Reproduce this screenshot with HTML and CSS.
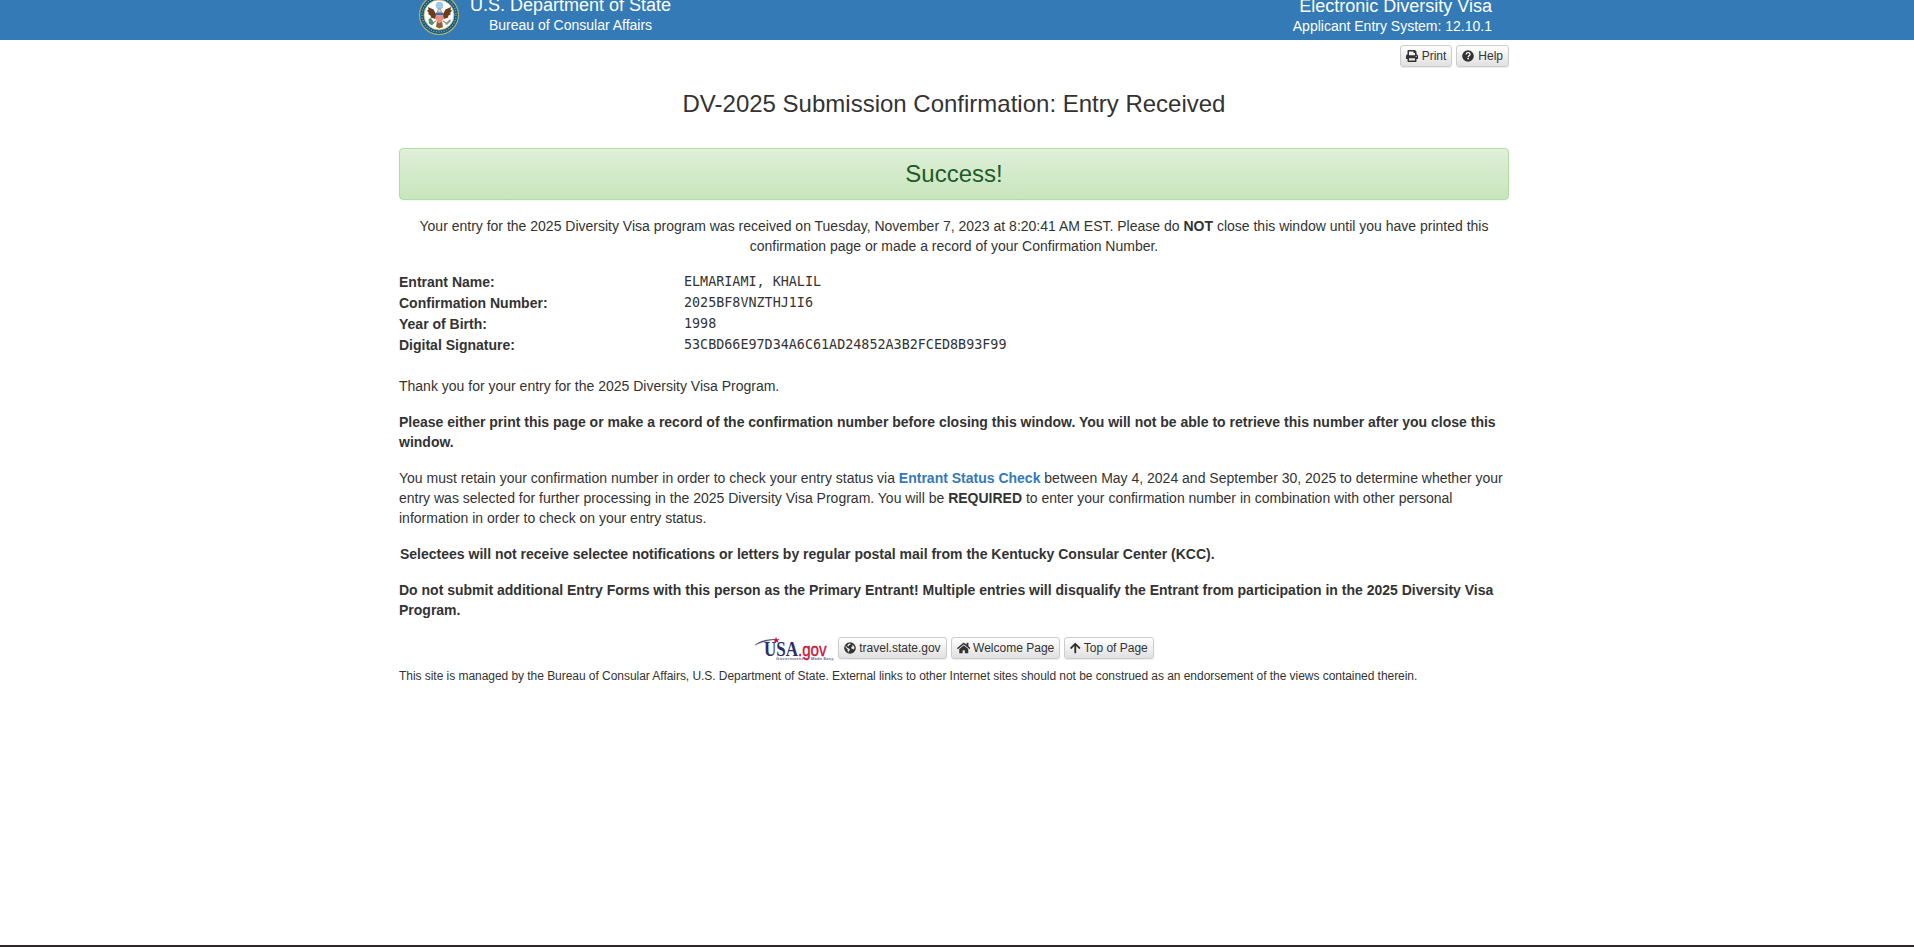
FILE: index.html
```html
<!DOCTYPE html>
<html lang="en">
<head>
<meta charset="utf-8">
<title>DV-2025 Submission Confirmation</title>
<link rel="stylesheet" href="styles.css">
</head>
<body>
<header class="banner">
  <div class="banner-inner">
    <svg class="seal" viewBox="0 0 40 40">
      <circle cx="20" cy="20" r="20" fill="#b9b36a"/>
      <circle cx="20" cy="20" r="18.900" fill="#155a86"/>
      <circle cx="20" cy="20" r="17" fill="none" stroke="#8fae96" stroke-width="1.300" stroke-dasharray="1.100 1.500"/>
      <circle cx="20" cy="20" r="15" fill="#fff" stroke="#c5b865" stroke-width=".8"/>
      <circle cx="20.500" cy="10.500" r="3.800" fill="#9cc8ec"/>
      <path d="M17 19 L14.500 14.500 L9 12 L9.500 15 L7.800 15.500 L10 18 L9 19 L12 21 L11.500 22.500 L16.500 24Z M24 19 L26.500 14.500 L32 12 L31.500 15 L33.200 15.500 L31 18 L32 19 L29 21 L29.500 22.500 L24.500 24Z" fill="#6b3d1c"/>
      <path d="M18.500 17 L19 14.300 L21.500 14 L22.500 17Z" fill="#e8e4da" stroke="#7b512d" stroke-width=".5"/>
      <path d="M18 26 L17 32 L20.500 33.500 L24 32 L23 26Z" fill="#8a6038"/>
      <path d="M17 17.500h7v3h-7z" fill="#4a68a4"/>
      <path d="M17 20.500h7v4q-1 3-3.500 4q-2.500-1-3.500-4z" fill="#ec8d86"/>
      <path d="M17 26 L13 28.500 M24 26 L28 28.500" stroke="#b08a4a" stroke-width="1.300"/>
      <path d="M9.500 24l2.500-1 3 5-2 2.500-3-2z" fill="#4f9471"/>
      <path d="M26 29l5-5 1 2-4 4z" fill="#8c9793"/>
    </svg>
    <div class="agency">
      <div class="title">U.S. Department of State</div>
      <div class="sub">Bureau of Consular Affairs</div>
    </div>
    <div class="system">
      <div class="title">Electronic Diversity Visa</div>
      <div class="sub">Applicant Entry System: 12.10.1</div>
    </div>
  </div>
</header>
<main class="container">
  <div class="tools">
    <a class="btn"><svg class="ico" viewBox="0 0 512 512"><path d="M448 192V77.250c0-8.490-3.370-16.620-9.370-22.630L393.370 9.370c-6-6-14.140-9.370-22.630-9.370H96C78.330 0 64 14.330 64 32v160c-35.350 0-64 28.650-64 64v112c0 8.840 7.160 16 16 16h48v96c0 17.670 14.330 32 32 32h320c17.670 0 32-14.330 32-32v-96h48c8.840 0 16-7.160 16-16V256c0-35.350-28.650-64-64-64zm-64 256H128v-96h256v96zm0-224H128V64h192v48c0 8.840 7.160 16 16 16h48v96zm48 72c-13.250 0-24-10.750-24-24 0-13.260 10.750-24 24-24s24 10.740 24 24c0 13.250-10.750 24-24 24z"/></svg> Print</a>
    <a class="btn"><svg class="ico" viewBox="0 0 512 512"><circle cx="256" cy="256" r="248"/><path d="M174 194q10-82 88-82 82 0 82 72 0 38-42 64-38 24-38 58" fill="none" stroke="#fff" stroke-width="54"/><circle cx="260" cy="366" r="37" fill="#fff"/></svg> Help</a>
  </div>
  <h1 class="heading">DV-2025 Submission Confirmation: Entry Received</h1>
  <div class="alert">Success!</div>
  <p class="text intro">Your entry for the 2025 Diversity Visa program was received on Tuesday, November 7, 2023 at 8:20:41 AM EST. Please do <b>NOT</b> close this window until you have printed this confirmation page or made a record of your Confirmation Number.</p>
  <dl class="details">
    <dt>Entrant Name:</dt><dd>ELMARIAMI, KHALIL</dd>
    <dt>Confirmation Number:</dt><dd>2025BF8VNZTHJ1I6</dd>
    <dt>Year of Birth:</dt><dd>1998</dd>
    <dt>Digital Signature:</dt><dd>53CBD66E97D34A6C61AD24852A3B2FCED8B93F99</dd>
  </dl>
  <p class="text">Thank you for your entry for the 2025 Diversity Visa Program.</p>
  <p class="text"><b>Please either print this page or make a record of the confirmation number before closing this window. You will not be able to retrieve this number after you close this window.</b></p>
  <p class="text">You must retain your confirmation number in order to check your entry status via <a class="link">Entrant Status Check</a> between May 4, 2024 and September 30, 2025 to determine whether your entry was selected for further processing in the 2025 Diversity Visa Program. You will be <b>REQUIRED</b> to enter your confirmation number in combination with other personal information in order to check on your entry status.</p>
  <p class="text notice"><b>Selectees will not receive selectee notifications or letters by regular postal mail from the Kentucky Consular Center (KCC).</b></p>
  <p class="text"><b>Do not submit additional Entry Forms with this person as the Primary Entrant! Multiple entries will disqualify the Entrant from participation in the 2025 Diversity Visa Program.</b></p>
  <footer class="footer">
    <div class="links">
      <svg class="usagov" viewBox="0 0 80 24">
        <path d="M1 8 Q9 2 20 2.500 Q10 3.800 1 8Z" fill="#2c2c6c" stroke="#2c2c6c" stroke-width=".4"/>
        <text x="10" y="18.500" class="usa" textLength="34" lengthAdjust="spacingAndGlyphs">USA</text>
        <text x="44" y="18.500" class="gov" textLength="28.500" lengthAdjust="spacingAndGlyphs">.gov</text>
        <path d="M22 0l1 2.200 2.600-.2-1.900 1.700 1 2.300-2.400-1.200-2.200 1.400.6-2.500-2-1.500 2.500-.1z" fill="#c8143c"/>
        <text x="22" y="22.500" class="tag" textLength="27">Government</text>
        <text x="57" y="22.500" class="tag" textLength="22.500">Made Easy</text>
      </svg>
      <a class="btn"><svg class="ico" viewBox="0 0 512 512"><circle cx="256" cy="256" r="248"/><path d="M82 150l40 80 60 36 70 30-8 60-44 36-12 70-30-70-4-70-40-50-50-60zM226 62l60 10-20 46-46 22-20 46-60-10 20-60zM350 120l70 50 30 90-40 60-50-20-50-30 4-60 50-30z" fill="#eee"/></svg> travel.state.gov</a>
      <a class="btn"><svg class="ico wide" viewBox="0 0 576 512"><path d="M280 148 96 300v164q0 16 16 16h112q16 0 16-16v-96q0-16 16-16h64q16 0 16 16v96q0 16 16 16h112q16 0 16-16V300L296 148q-8-6-16 0zM572 251l-84-69V44q0-12-12-12h-56q-12 0-12 12v72l-90-74q-30-24-61 0L4 251q-9 8-2 17l26 31q8 9 17 2L280 107q8-6 16 0l235 194q9 7 17-2l26-31q7-9-2-17z"/></svg> Welcome Page</a>
      <a class="btn"><svg class="ico narrow" viewBox="0 0 448 512"><path d="M34 288 12 266q-16-17 0-34L207 39q17-16 34 0l195 193q16 17 0 34l-22 22q-17 16-34-1L264 167v289q0 24-24 24h-32q-24 0-24-24V167L68 288q-17 16-34 0z"/></svg> Top of Page</a>
    </div>
    <p class="fine">This site is managed by the Bureau of Consular Affairs, U.S. Department of State. External links to other Internet sites should not be construed as an endorsement of the views contained therein.</p>
  </footer>
</main>
<div class="bottom-bar"></div>
</body>
</html>
```
FILE: styles.css
```css
* { box-sizing: border-box; }
body {
  margin: 0;
  height: 947px;
  overflow: hidden;
  display: flex;
  flex-direction: column;
  align-items: center;
  background: #fff;
  color: #333;
  font: 14px/20px "Liberation Sans", Arial, sans-serif;
}
.banner { width: 100%; height: 40px; flex: none; background: #337ab7; color: #fff; overflow: hidden; display: flex; justify-content: center; }
.banner-inner { width: 1110px; margin-right: 6px; padding: 0 17px 0 20px; display: flex; align-items: flex-start; }
.seal { width: 40px; height: 40px; margin-top: -5px; }
.agency { margin: -6px 0 0 11px; text-align: center; }
.system { margin: -5px 0 0 auto; text-align: right; }
.title { font-size: 18px; line-height: 22px; }
.sub { font-size: 14px; line-height: 18px; }
.container { width: 1110px; margin-right: 6px; flex: 1; }
.tools { display: flex; justify-content: flex-end; gap: 4px; padding-top: 5px; }
.tools .btn { gap: 4px; }
.btn {
  display: inline-flex;
  align-items: center;
  gap: 3px;
  height: 22px;
  padding: 0 5px;
  border: 1px solid #ccc;
  border-radius: 3px;
  background: linear-gradient(#fff, #e0e0e0);
  box-shadow: inset 0 1px 0 rgba(255,255,255,.15), 0 1px 1px rgba(0,0,0,.075);
  font-size: 12px;
  line-height: 18px;
  white-space: nowrap;
}
.ico { width: 12px; height: 12px; fill: #333; flex: none; }
.wide { width: 13.5px; }
.narrow { width: 10.5px; }
.heading { margin: 24px 0 0; font-size: 24px; line-height: 26px; font-weight: 400; text-align: center; }
.alert {
  margin: 31px 0 16px;
  height: 52px;
  border: 1px solid #b2dba1;
  border-radius: 4px;
  background: linear-gradient(#dff0d8, #c8e5bc);
  box-shadow: inset 0 1px 0 rgba(255,255,255,.25), 0 1px 2px rgba(0,0,0,.05);
  color: #1d5a2a;
  font-size: 24px;
  line-height: 50px;
  text-align: center;
}
.text { margin: 0 0 16px; }
.intro { text-align: center; }
.details { margin: 0 0 20px; display: grid; grid-template-columns: 285px 1fr; grid-auto-rows: 21px; line-height: 21px; }
.details dt { font-weight: 700; }
.details dd { margin: 0; font: 13.4px/20px "DejaVu Sans Mono", monospace; }
.link { color: #337ab7; font-weight: 700; }
.notice { padding-left: 1px; }
.footer { display: flex; flex-direction: column; padding-top: 1px; }
.links { display: flex; justify-content: center; gap: 4px; }
.usagov { width: 80px; height: 24px; }
.usa { font: 700 20px "Liberation Serif", serif; fill: #2c2c6c; }
.gov { font: 18px "Liberation Sans", sans-serif; fill: #c8143c; stroke: #c8143c; stroke-width: .4px; }
.tag { font: 700 4px "Liberation Sans", sans-serif; fill: #6666a0; }
.fine { margin: 7px 0 0; font-size: 12px; line-height: 17px; letter-spacing: -.045px; }
.bottom-bar { width: 100%; height: 2px; flex: none; background: #2b2527; }
```
